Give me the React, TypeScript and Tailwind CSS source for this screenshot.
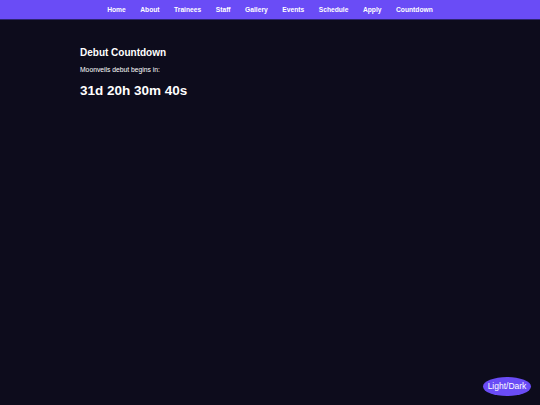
const links = ["Home", "About", "Trainees", "Staff", "Gallery", "Events", "Schedule", "Apply", "Countdown"]

export default function App() {
  return (
    <div className="min-h-[405px] bg-[#0d0c1c] text-white font-['Liberation_Sans',Arial,sans-serif] relative">
      <nav className="h-[19px] bg-[#6a4cf6] shadow-[0_1px_0_#2e2470] flex items-center justify-center gap-[14.5px] pt-[1px]">
        {links.map((l) => (
          <a key={l} className="text-[6.7px] font-bold text-white leading-none">
            {l}
          </a>
        ))}
      </nav>

      <section className="pl-[80px] pt-[28px]">
        <h2 className="text-[10px] font-bold leading-[12px]">Debut Countdown</h2>
        <p className="text-[6.75px] leading-[8px] mt-[7px]">Moonveils debut begins in:</p>
        <div className="text-[13.5px] font-bold leading-[16px] mt-[8.5px]">31d 20h 30m 40s</div>
      </section>

      <button className="absolute right-[9px] bottom-[9px] w-[48px] h-[19px] rounded-[50%] bg-[#6a4cf6] text-white text-[8.5px] leading-none">
        Light/Dark
      </button>
    </div>
  )
}
